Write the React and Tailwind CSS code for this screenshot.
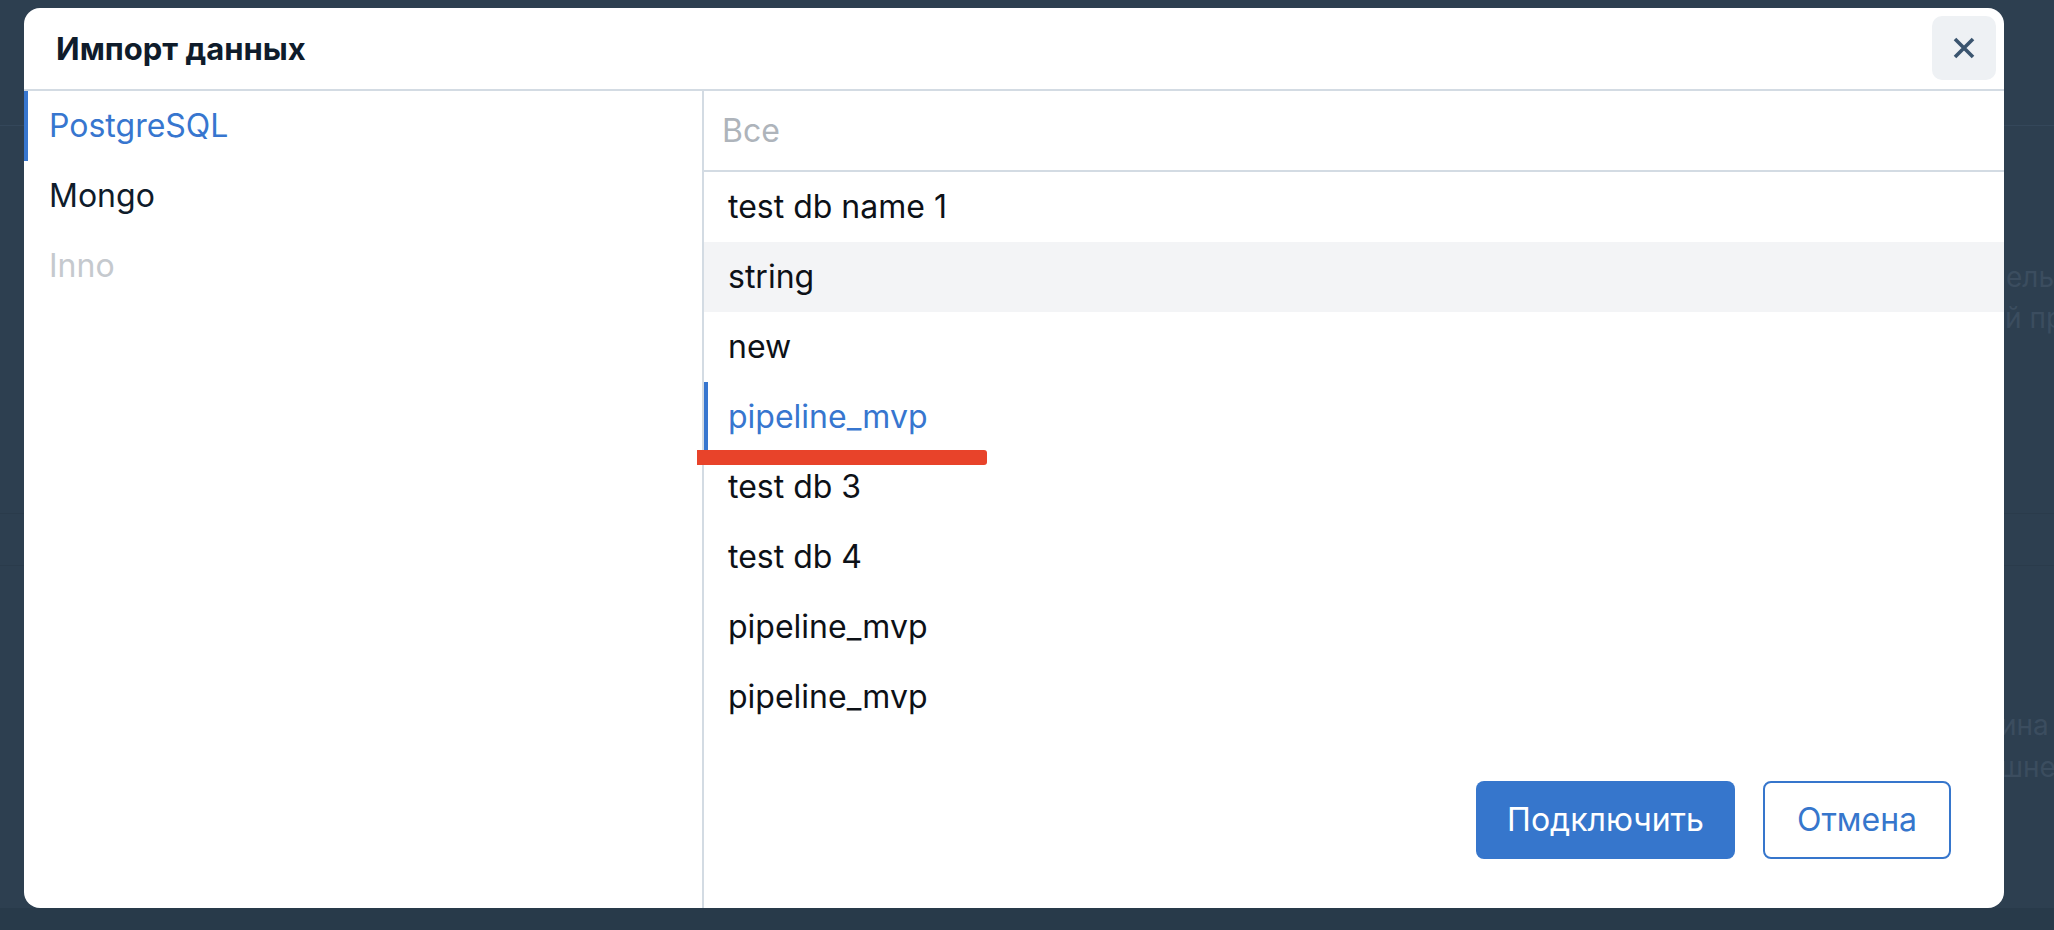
import React from "react";

const leftItems = [
  { label: "PostgreSQL", state: "active" },
  { label: "Mongo", state: "normal" },
  { label: "Inno", state: "disabled" },
];

const dbItems = [
  { label: "test db name 1" },
  { label: "string", hover: true },
  { label: "new" },
  { label: "pipeline_mvp", active: true },
  { label: "test db 3" },
  { label: "test db 4" },
  { label: "pipeline_mvp" },
  { label: "pipeline_mvp" },
];

export default function App() {
  return (
    <div className="relative w-[2054px] h-[930px] overflow-hidden bg-[#2d3f50] font-['Inter','Noto_Sans',sans-serif]">
      {/* page behind overlay */}
      <div className="absolute left-0 right-0 top-[125px] h-px bg-[#34475a]" />
      <div className="absolute left-0 right-0 top-[513px] h-px bg-[#2a3b4b]" />
      <div className="absolute left-0 right-0 top-[565px] h-px bg-[#2a3b4b]" />
      <div className="absolute left-0 right-0 top-[908px] bottom-0 bg-[#283a4a]" />
      <div className="absolute left-[2006px] top-[257px] text-[28px] leading-[41px] text-[#3b4d5f] whitespace-nowrap">
        <div>ель</div>
        <div className="-ml-[1px]">й пр</div>
      </div>
      <div className="absolute left-[2000px] top-[704px] text-[28px] leading-[42px] text-[#3b4d5f] whitespace-nowrap">
        <div>ина</div>
        <div>шне</div>
      </div>

      <div className="relative z-10 pt-[8px] pl-[24px]">
        <div className="w-[1980px] h-[900px] bg-white rounded-2xl flex flex-col overflow-hidden">
          {/* header */}
          <div className="h-[83px] shrink-0 flex items-center justify-between pl-[32px] pr-[8px] border-b-2 border-[#d3dbe3]">
            <h1 className="text-[31px] font-bold text-[#0f1c2b] leading-none">Импорт данных</h1>
            <button className="w-[64px] h-[64px] rounded-[10px] bg-[#eef1f4] flex items-center justify-center -mt-[2px]">
              <svg width="24" height="24" viewBox="0 0 24 24" fill="none">
                <path d="M3 3 L21 21 M21 3 L3 21" stroke="#3b556f" strokeWidth="3.6" strokeLinecap="butt" />
              </svg>
            </button>
          </div>

          {/* body */}
          <div className="flex flex-1 min-h-0">
            <div className="w-[680px] shrink-0 border-r-2 border-[#d3dbe3] flex flex-col">
              {leftItems.map((it) => (
                <div
                  key={it.label}
                  className={
                    "h-[70px] flex items-center border-l-4 pl-[21px] text-[32px] " +
                    (it.state === "active"
                      ? "border-[#3776cf] text-[#3776cf]"
                      : it.state === "disabled"
                      ? "border-transparent text-[#c5c9ce]"
                      : "border-transparent text-[#0f1c2b]")
                  }
                >
                  {it.label}
                </div>
              ))}
            </div>

            <div className="flex-1 flex flex-col">
              <div className="h-[81px] shrink-0 border-b-2 border-[#d3dbe3] flex items-center">
                <input
                  className="w-full h-full pl-[18px] text-[32px] outline-none bg-transparent placeholder:text-[#aeb4bb] text-[#111]"
                  placeholder="Все"
                />
              </div>
              <div className="flex flex-col">
                {dbItems.map((it, i) => (
                  <div
                    key={i}
                    className={
                      "h-[70px] flex items-center border-l-4 pl-[20px] text-[32px] " +
                      (it.active
                        ? "border-[#3776cf] text-[#3776cf]"
                        : "border-transparent text-[#0d1117]") +
                      (it.hover ? " bg-[#f3f4f6]" : "")
                    }
                  >
                    {it.label}
                  </div>
                ))}
              </div>
              <div className="mt-auto flex justify-end gap-[28px] pr-[53px] pb-[49px]">
                <button className="w-[259px] h-[78px] rounded-lg bg-[#3676cc] text-white text-[32px]">
                  Подключить
                </button>
                <button className="w-[188px] h-[78px] rounded-lg border-2 border-[#3676cc] bg-white text-[#3676cc] text-[32px]">
                  Отмена
                </button>
              </div>
            </div>
          </div>
        </div>
      </div>

      {/* red annotation stroke */}
      <div className="absolute z-20 left-[697px] top-[450px] w-[290px] h-[15px] bg-[#e8432a] rounded-r-[3px]" />
    </div>
  );
}
